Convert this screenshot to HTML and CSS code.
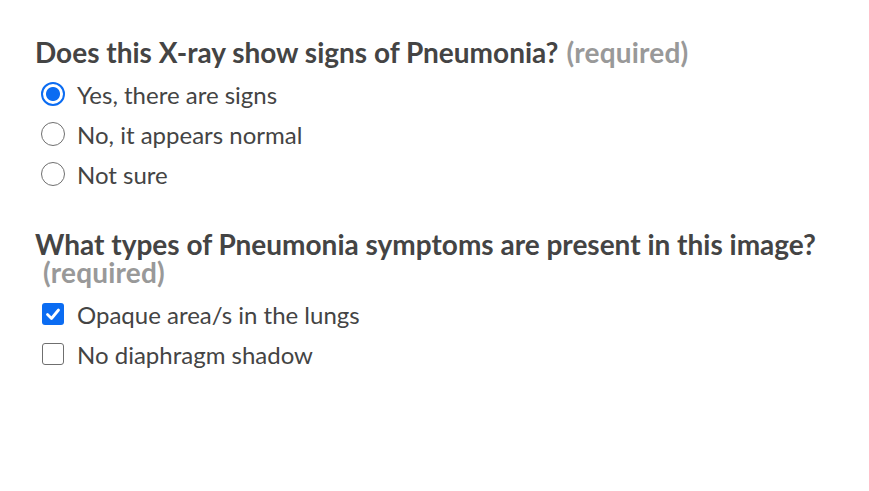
FILE: index.html
```html
<!DOCTYPE html>
<html>
<head>
<meta charset="utf-8">
<link rel="stylesheet" href="styles.css">
</head>
<body>
<form class="form">
  <div class="question">
    <div class="title">Does this X-ray show signs of Pneumonia?<span class="req">(required)</span></div>
    <label class="option"><input type="radio" name="q1" class="radio" checked><span>Yes, there are signs</span></label>
    <label class="option"><input type="radio" name="q1" class="radio"><span>No, it appears normal</span></label>
    <label class="option"><input type="radio" name="q1" class="radio"><span>Not sure</span></label>
  </div>
  <div class="question">
    <div class="title">What types of Pneumonia symptoms are present in this image?<span class="req">(required)</span></div>
    <label class="option"><input type="checkbox" class="check" checked><span>Opaque area/s in the lungs</span></label>
    <label class="option"><input type="checkbox" class="check"><span>No diaphragm shadow</span></label>
  </div>
</form>
</body>
</html>
```

FILE: styles.css
```css
html, body {
  margin: 0;
  padding: 0;
  background: #fff;
}
body {
  font-family: Lato, "Open Sans", sans-serif;
  color: #444;
}
.form {
  padding: 38px 35px 0 35px;
  display: flex;
  flex-direction: column;
  gap: 36px;
}
.question {
  display: flex;
  flex-direction: column;
}
.title {
  font-size: 28px;
  font-weight: 700;
  line-height: 28px;
  color: #444;
  margin-bottom: 8px;
}
.req {
  margin-left: 8px;
  color: #999;
  letter-spacing: 0.2px;
}
.option {
  display: flex;
  align-items: center;
  height: 40px;
  font-size: 24px;
  color: #444;
}
.option span {
  margin-left: 12px;
}
.radio, .check {
  appearance: none;
  -webkit-appearance: none;
  margin: 0 0 0 6px;
  width: 24px;
  height: 24px;
  box-sizing: border-box;
  flex: none;
}
.radio {
  border: 1.5px solid #6f6f6f;
  border-radius: 50%;
}
.radio:checked {
  border: 2px solid #0b6cf2;
  background: radial-gradient(circle, #0b6cf2 0 6.5px, #fff 7.5px);
}
.check {
  width: 22px;
  height: 22px;
  margin-left: 7px;
  margin-right: 1px;
  border: 1.5px solid #6f6f6f;
  border-radius: 3px;
}
.check:checked {
  border: 0;
  background-color: #0b6cf2;
  background-image: url("data:image/svg+xml,%3Csvg xmlns='http://www.w3.org/2000/svg' viewBox='0 0 22 22'%3E%3Cpath d='M5.5 11.5l4 4 7-8.5' fill='none' stroke='white' stroke-width='2.8' stroke-linecap='round' stroke-linejoin='round'/%3E%3C/svg%3E");
}
```
